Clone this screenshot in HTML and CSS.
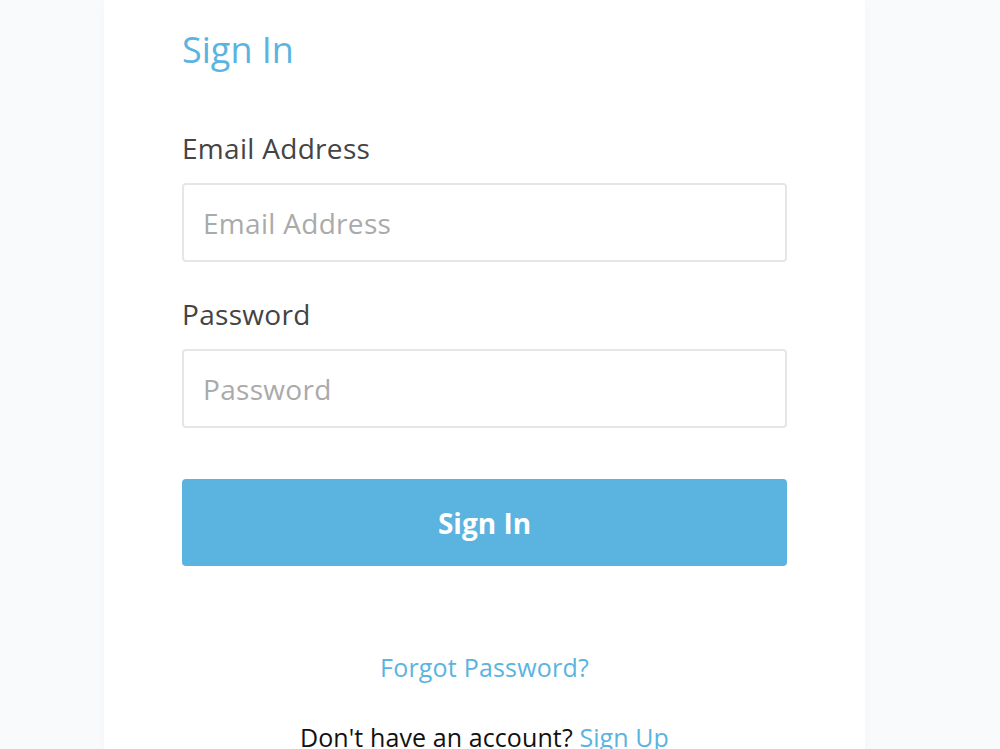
FILE: index.html
```html
<!DOCTYPE html>
<html lang="en">
<head>
    <meta charset="UTF-8">
    <meta name="viewport" content="width=device-width, initial-scale=1.0">
    <title>Sign In</title>
    <link rel="stylesheet" href="styles.css">
</head>
<body>
    <div class="page">
        <div class="card">
            <h1 class="title">Sign In</h1>
            <form class="signin-form">
                <div class="form-group">
                    <label for="email">Email Address</label>
                    <input type="email" class="form-control" id="email" placeholder="Email Address">
                </div>
                <div class="form-group">
                    <label for="password">Password</label>
                    <input type="password" class="form-control" id="password" placeholder="Password">
                </div>
                <button type="submit" class="btn-primary">Sign In</button>
            </form>
            <a href="#" class="forgot">Forgot Password?</a>
            <p class="signup">Don't have an account? <a href="#">Sign Up</a></p>
        </div>
    </div>
</body>
</html>
```

FILE: styles.css
```css
html, body {
  margin: 0;
  padding: 0;
}

body {
  background-color: #f9fafc;
  font-family: "Open Sans", Lato, sans-serif;
  color: #444;
}

.page {
  display: flex;
  padding-left: 104px;
}

.card {
  width: 761px;
  min-height: 760px;
  box-sizing: border-box;
  background-color: #fff;
  padding: 28px 78px 0;
  box-shadow: 0 0 12px rgba(0, 0, 0, 0.025);
  display: flex;
  flex-direction: column;
}

.title {
  margin: 0;
  font-size: 36px;
  font-weight: 400;
  color: #5bb4e0;
  line-height: 44px;
}

.signin-form {
  margin-top: 59px;
  display: flex;
  flex-direction: column;
}

.form-group {
  display: flex;
  flex-direction: column;
  margin-bottom: 35px;
}

label {
  font-size: 28px;
  line-height: 34px;
  letter-spacing: 0.3px;
  margin-bottom: 18px;
  color: #444;
}

.form-control {
  height: 79px;
  box-sizing: border-box;
  border: 2px solid #e6e6e6;
  border-radius: 4px;
  padding: 0 19px;
  font-family: inherit;
  font-size: 28px;
  letter-spacing: 0.3px;
  color: #444;
  outline: none;
}

.form-control::placeholder {
  color: #aaa;
}

.btn-primary {
  margin-top: 16px;
  height: 87px;
  border: none;
  border-radius: 4px;
  background-color: #5bb4e0;
  color: #fff;
  font-family: inherit;
  font-size: 28px;
  font-weight: 700;
  cursor: pointer;
}

.forgot {
  margin-top: 86px;
  align-self: center;
  font-size: 25px;
  line-height: 30px;
  letter-spacing: 0.2px;
  color: #5bb4e0;
  text-decoration: none;
}

.signup {
  margin: 40px 0 0;
  text-align: center;
  font-size: 25px;
  line-height: 30px;
  letter-spacing: 0.1px;
  color: #111;
}

.signup a {
  color: #5bb4e0;
  text-decoration: none;
}
```
